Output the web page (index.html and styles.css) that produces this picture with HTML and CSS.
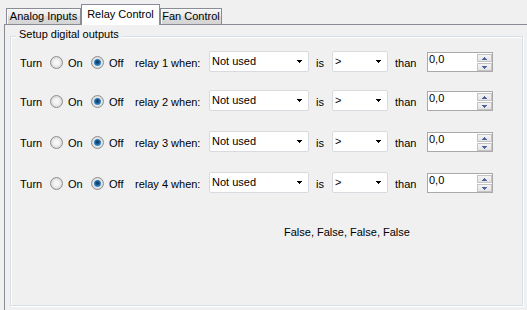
FILE: index.html
```html
<!DOCTYPE html>
<html lang="en">
<head>
    <meta charset="UTF-8">
    <title>Relay Control</title>
    <link rel="stylesheet" href="styles.css">
</head>
<body>
    <div class="tabs">
        <div class="tab analog">Analog Inputs</div>
        <div class="tab relay-tab active">Relay Control</div>
        <div class="tab fan">Fan Control</div>
    </div>
    <div class="page">
        <div class="group">
            <div class="group-title">Setup digital outputs</div>

            <div class="row">
                <span class="label turn">Turn</span>
                <span class="option on"><span class="radio"></span><span class="label">On</span></span>
                <span class="option off"><span class="radio checked"></span><span class="label">Off</span></span>
                <span class="label relay">relay 1 when:</span>
                <div class="combo source"><span class="text">Not used</span><svg class="arrow" width="5" height="3" viewBox="0 0 5 3"><path d="M0 0h5v1H0zM1 1h3v1H1zM2 2h1v1H2z"/></svg></div>
                <span class="label is">is</span>
                <div class="combo op"><span class="text">&gt;</span><svg class="arrow" width="5" height="3" viewBox="0 0 5 3"><path d="M0 0h5v1H0zM1 1h3v1H1zM2 2h1v1H2z"/></svg></div>
                <span class="label than">than</span>
                <div class="numeric"><span class="value">0,0</span><div class="spin"><span class="spin-btn"><svg width="5" height="3" viewBox="0 0 5 3"><path d="M2 0h1v1H2zM1 1h3v1H1zM0 2h5v1H0z"/></svg></span><span class="spin-btn"><svg width="5" height="3" viewBox="0 0 5 3"><path d="M0 0h5v1H0zM1 1h3v1H1zM2 2h1v1H2z"/></svg></span></div></div>
            </div>

            <div class="row">
                <span class="label turn">Turn</span>
                <span class="option on"><span class="radio"></span><span class="label">On</span></span>
                <span class="option off"><span class="radio checked"></span><span class="label">Off</span></span>
                <span class="label relay">relay 2 when:</span>
                <div class="combo source"><span class="text">Not used</span><svg class="arrow" width="5" height="3" viewBox="0 0 5 3"><path d="M0 0h5v1H0zM1 1h3v1H1zM2 2h1v1H2z"/></svg></div>
                <span class="label is">is</span>
                <div class="combo op"><span class="text">&gt;</span><svg class="arrow" width="5" height="3" viewBox="0 0 5 3"><path d="M0 0h5v1H0zM1 1h3v1H1zM2 2h1v1H2z"/></svg></div>
                <span class="label than">than</span>
                <div class="numeric"><span class="value">0,0</span><div class="spin"><span class="spin-btn"><svg width="5" height="3" viewBox="0 0 5 3"><path d="M2 0h1v1H2zM1 1h3v1H1zM0 2h5v1H0z"/></svg></span><span class="spin-btn"><svg width="5" height="3" viewBox="0 0 5 3"><path d="M0 0h5v1H0zM1 1h3v1H1zM2 2h1v1H2z"/></svg></span></div></div>
            </div>

            <div class="row">
                <span class="label turn">Turn</span>
                <span class="option on"><span class="radio"></span><span class="label">On</span></span>
                <span class="option off"><span class="radio checked"></span><span class="label">Off</span></span>
                <span class="label relay">relay 3 when:</span>
                <div class="combo source"><span class="text">Not used</span><svg class="arrow" width="5" height="3" viewBox="0 0 5 3"><path d="M0 0h5v1H0zM1 1h3v1H1zM2 2h1v1H2z"/></svg></div>
                <span class="label is">is</span>
                <div class="combo op"><span class="text">&gt;</span><svg class="arrow" width="5" height="3" viewBox="0 0 5 3"><path d="M0 0h5v1H0zM1 1h3v1H1zM2 2h1v1H2z"/></svg></div>
                <span class="label than">than</span>
                <div class="numeric"><span class="value">0,0</span><div class="spin"><span class="spin-btn"><svg width="5" height="3" viewBox="0 0 5 3"><path d="M2 0h1v1H2zM1 1h3v1H1zM0 2h5v1H0z"/></svg></span><span class="spin-btn"><svg width="5" height="3" viewBox="0 0 5 3"><path d="M0 0h5v1H0zM1 1h3v1H1zM2 2h1v1H2z"/></svg></span></div></div>
            </div>

            <div class="row">
                <span class="label turn">Turn</span>
                <span class="option on"><span class="radio"></span><span class="label">On</span></span>
                <span class="option off"><span class="radio checked"></span><span class="label">Off</span></span>
                <span class="label relay">relay 4 when:</span>
                <div class="combo source"><span class="text">Not used</span><svg class="arrow" width="5" height="3" viewBox="0 0 5 3"><path d="M0 0h5v1H0zM1 1h3v1H1zM2 2h1v1H2z"/></svg></div>
                <span class="label is">is</span>
                <div class="combo op"><span class="text">&gt;</span><svg class="arrow" width="5" height="3" viewBox="0 0 5 3"><path d="M0 0h5v1H0zM1 1h3v1H1zM2 2h1v1H2z"/></svg></div>
                <span class="label than">than</span>
                <div class="numeric"><span class="value">0,0</span><div class="spin"><span class="spin-btn"><svg width="5" height="3" viewBox="0 0 5 3"><path d="M2 0h1v1H2zM1 1h3v1H1zM0 2h5v1H0z"/></svg></span><span class="spin-btn"><svg width="5" height="3" viewBox="0 0 5 3"><path d="M0 0h5v1H0zM1 1h3v1H1zM2 2h1v1H2z"/></svg></span></div></div>
            </div>

            <div class="status">False, False, False, False</div>
        </div>
    </div>
</body>
</html>
```

FILE: styles.css
```css
* {
    margin: 0;
    padding: 0;
    box-sizing: border-box;
}

body {
    width: 527px;
    height: 310px;
    overflow: hidden;
    background: #f0f0f0;
    font-family: "Liberation Sans", Arial, sans-serif;
    font-size: 11px;
    color: #000;
}

/* tab strip */
.tabs {
    display: flex;
    align-items: flex-end;
    height: 24px;
    padding-left: 6px;
}

.tab {
    height: 16px;
    line-height: 15px;
    text-align: center;
    border: 1px solid #898c95;
    border-bottom: none;
    background: linear-gradient(#f2f2f2, #ebebeb 50%, #dddddd 50%, #d4d4d4);
    box-shadow: inset 1px 1px 0 #fbfbfb;
    white-space: nowrap;
}

.analog {
    width: 75px;
}

.relay-tab {
    width: 79px;
}

.fan {
    width: 62px;
}

.tab.active {
    position: relative;
    z-index: 1;
    height: 21px;
    margin-bottom: -1px;
    line-height: 18px;
    background: #fff;
    box-shadow: none;
}

.page {
    height: 286px;
    margin-left: 4px;
    border-top: 1px solid #898c95;
    border-left: 1px solid #898c95;
}

/* group box */
.group {
    height: 270px;
    margin: 11px 4px 0 5px;
    border: 1px solid #d5dfe5;
    box-shadow: inset 1px 1px 0 #fff, 1px 1px 0 #fff;
}

.group-title {
    display: table;
    margin: -9px 0 0 5px;
    padding: 0 2px 0 3px;
    line-height: 13px;
    background: #f0f0f0;
}

.row {
    display: flex;
    align-items: flex-start;
    height: 21px;
    margin-top: 20px;
    padding-left: 9px;
}

.group-title + .row {
    margin-top: 10px;
    margin-bottom: -2px;
}

.label {
    padding-top: 6px;
    line-height: 13px;
    white-space: nowrap;
}

.turn {
    width: 30px;
}

.option {
    display: flex;
    align-items: flex-start;
}

.option .label {
    margin-left: 5px;
}

.on {
    width: 41px;
}

.off {
    width: 44px;
}

.relay {
    width: 74px;
}

.is {
    width: 23px;
    padding-left: 7px;
}

.than {
    width: 39px;
    padding-left: 7px;
}

/* radio buttons */
.radio {
    display: flex;
    align-items: center;
    justify-content: center;
    width: 13px;
    height: 13px;
    margin-top: 5px;
    border: 1px solid #8e8f8f;
    border-radius: 50%;
    background: radial-gradient(circle, #fafafa 0, #f2f2f2 35%, #d6d6d6 75%, #eeeeee 100%);
}

.radio.checked::after {
    content: "";
    width: 7px;
    height: 7px;
    border-radius: 50%;
    background: radial-gradient(circle at 50% 45%, #0c3356 0, #1d5f99 40%, #4b9ad8 75%, #9fd2f4 100%);
}

/* combo boxes */
.combo {
    display: flex;
    align-items: center;
    justify-content: space-between;
    height: 21px;
    padding: 0 6px 0 2px;
    border: 1px solid #d9dadf;
    border-radius: 2px;
    background: #fff;
    line-height: 17px;
}

.combo .text {
    align-self: flex-start;
    padding-top: 1px;
}

.source {
    width: 100px;
}

.op {
    width: 56px;
}

.arrow {
    display: block;
    fill: #000;
}

/* numeric up/down */
.numeric {
    display: flex;
    justify-content: space-between;
    width: 66px;
    height: 20px;
    margin-top: 1px;
    padding-left: 1px;
    border: 1px solid #a9a9a9;
    background: #fff;
}

.value {
    line-height: 13px;
}

.spin {
    display: flex;
    flex-direction: column;
    gap: 1px;
    width: 15px;
    padding-top: 1px;
}

.spin-btn {
    display: flex;
    align-items: center;
    justify-content: center;
    height: 8px;
    border: 1px solid #c3c3c3;
    background: linear-gradient(#f4f4f4, #e4e4e4);
}

.spin-btn svg {
    display: block;
    fill: #4f62a0;
}

.status {
    margin: 33px 0 0 273px;
    line-height: 13px;
}
```
